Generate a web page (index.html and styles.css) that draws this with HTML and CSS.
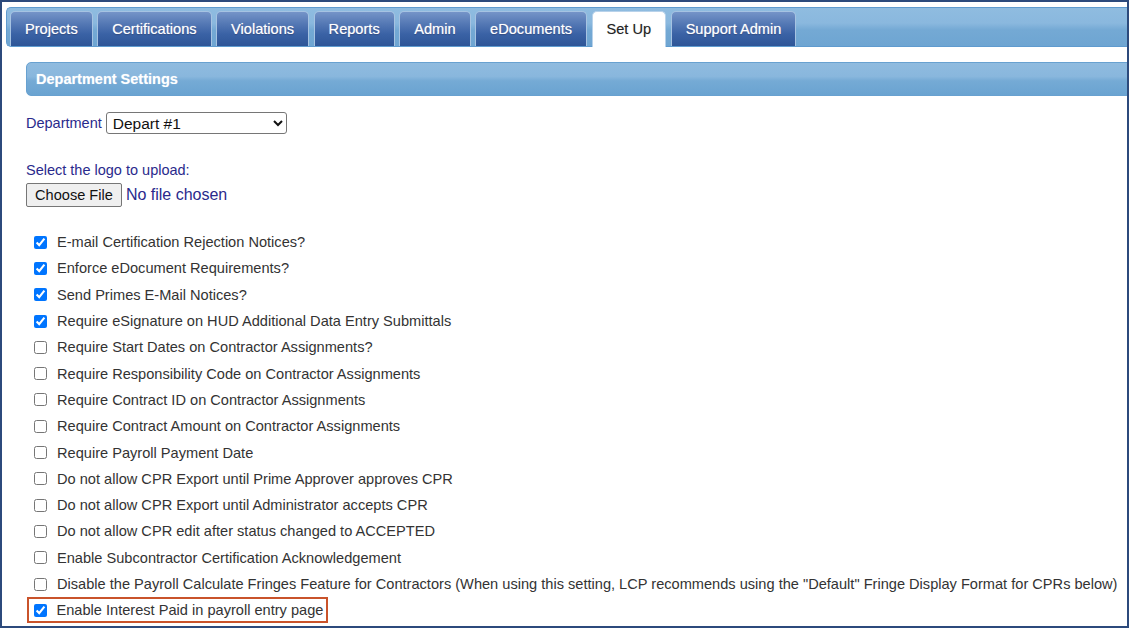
FILE: index.html
```html
<!DOCTYPE html>
<html lang="en">
<head>
<meta charset="utf-8">
<title>Department Settings</title>
<link rel="stylesheet" href="styles.css">
</head>
<body>
<div class="frame">
  <nav class="tabbar">
    <a class="tab">Projects</a>
    <a class="tab">Certifications</a>
    <a class="tab">Violations</a>
    <a class="tab">Reports</a>
    <a class="tab">Admin</a>
    <a class="tab">eDocuments</a>
    <a class="tab active">Set Up</a>
    <a class="tab">Support Admin</a>
  </nav>
  <main class="content">
    <div class="section-head">Department Settings</div>
    <div class="dept-row">
      <label class="navy" for="dept">Department</label>
      <select id="dept" class="dept-select">
        <option>Depart #1</option>
      </select>
    </div>
    <div class="upload">
      <div class="navy">Select the logo to upload:</div>
      <input type="file" class="file-input">
    </div>
    <ul class="options">
      <li class="row"><input type="checkbox" checked><span>E-mail Certification Rejection Notices?</span></li>
      <li class="row"><input type="checkbox" checked><span>Enforce eDocument Requirements?</span></li>
      <li class="row"><input type="checkbox" checked><span>Send Primes E-Mail Notices?</span></li>
      <li class="row"><input type="checkbox" checked><span>Require eSignature on HUD Additional Data Entry Submittals</span></li>
      <li class="row"><input type="checkbox"><span>Require Start Dates on Contractor Assignments?</span></li>
      <li class="row"><input type="checkbox"><span>Require Responsibility Code on Contractor Assignments</span></li>
      <li class="row"><input type="checkbox"><span>Require Contract ID on Contractor Assignments</span></li>
      <li class="row"><input type="checkbox"><span>Require Contract Amount on Contractor Assignments</span></li>
      <li class="row"><input type="checkbox"><span>Require Payroll Payment Date</span></li>
      <li class="row"><input type="checkbox"><span>Do not allow CPR Export until Prime Approver approves CPR</span></li>
      <li class="row"><input type="checkbox"><span>Do not allow CPR Export until Administrator accepts CPR</span></li>
      <li class="row"><input type="checkbox"><span>Do not allow CPR edit after status changed to ACCEPTED</span></li>
      <li class="row"><input type="checkbox"><span>Enable Subcontractor Certification Acknowledgement</span></li>
      <li class="row"><input type="checkbox"><span>Disable the Payroll Calculate Fringes Feature for Contractors (When using this setting, LCP recommends using the "Default" Fringe Display Format for CPRs below)</span></li>
      <li class="row highlight"><input type="checkbox" checked><span>Enable Interest Paid in payroll entry page</span></li>
    </ul>
  </main>
</div>
</body>
</html>
```
FILE: styles.css
```css
html, body {
  margin: 0;
  padding: 0;
  background: #ffffff;
}

body {
  font-family: "Liberation Sans", Arial, sans-serif;
}

.frame {
  width: 1129px;
  height: 628px;
  box-sizing: border-box;
  border: 2px solid #2c4a7c;
  overflow: hidden;
  background: #ffffff;
}

/* ---------- tab bar ---------- */
.tabbar {
  display: flex;
  align-items: flex-end;
  gap: 4.5px;
  height: 40px;
  box-sizing: border-box;
  margin: 5px 0 0 4px;
  padding-left: 3px;
  border: 1px solid #5f9bcf;
  border-right: none;
  border-radius: 5px 0 0 5px;
  background: linear-gradient(180deg, #8fbce0 0%, #8ab8de 40%, #74a9d4 58%, #6ea5d2 100%);
}

.tab {
  display: flex;
  align-items: center;
  height: 35px;
  box-sizing: border-box;
  padding: 0 14px;
  border: 1px solid #a6c3e2;
  border-bottom: none;
  border-radius: 5px 5px 0 0;
  background: linear-gradient(180deg, #7594c8 0%, #5478b4 35%, #3a62a5 65%, #2e5597 100%);
  color: #ffffff;
  font-size: 14.6px;
  text-shadow: 0 0 1px rgba(255, 255, 255, 0.6), 0 1px 1px rgba(0, 0, 40, 0.35);
  white-space: nowrap;
  cursor: pointer;
}

.tab.active {
  background: #ffffff;
  color: #222222;
  border-color: #b8d2ea;
  height: 36px;
  margin-bottom: -1px;
  padding-bottom: 1px;
  text-shadow: 0 0 1px rgba(0, 0, 0, 0.25);
}

/* ---------- content ---------- */
.content {
  padding: 15px 0 0 24px;
}

.section-head {
  height: 34px;
  box-sizing: border-box;
  display: flex;
  align-items: center;
  padding-left: 9px;
  margin-right: -10px;
  border: 1px solid #68a1d0;
  border-radius: 5px 0 0 5px;
  background: linear-gradient(180deg, #8fbbdf 0%, #89b7dd 42%, #75aad5 56%, #6aa3d1 100%);
  color: #ffffff;
  font-weight: bold;
  font-size: 14.5px;
  text-shadow: 0 0 1px rgba(255, 255, 255, 0.5);
}

.navy {
  color: #2a2a8c;
  font-size: 14.5px;
}

.dept-row {
  display: flex;
  align-items: center;
  gap: 4px;
  margin-top: 16px;
  height: 22px;
}

.dept-select {
  width: 181px;
  height: 22px;
  box-sizing: border-box;
  border: 1px solid #767676;
  border-radius: 3px;
  background: #ffffff;
  color: #111111;
  font-family: "Liberation Sans", Arial, sans-serif;
  font-size: 15.5px;
  padding: 0 2px;
}

.upload {
  margin-top: 28px;
  display: flex;
  flex-direction: column;
  align-items: flex-start;
  gap: 5px;
}

.file-input {
  font-family: "Liberation Sans", Arial, sans-serif;
  font-size: 16px;
  color: #2a2a8c;
  height: 24px;
}

.file-input::file-selector-button {
  height: 24px;
  padding: 0 8px;
  margin-right: 4px;
  border: 1px solid #767676;
  border-radius: 2px;
  background: #efefef;
  color: #111111;
  font-family: "Liberation Sans", Arial, sans-serif;
  font-size: 14.6px;
}

/* ---------- options ---------- */
.options {
  list-style: none;
  margin: 22px 0 0;
  padding: 0;
}

.row {
  display: flex;
  align-items: center;
  height: 26.3px;
  box-sizing: border-box;
  padding-left: 8px;
  color: #333333;
  font-size: 14.6px;
  white-space: nowrap;
}

.row input {
  width: 13px;
  height: 13px;
  margin: 0 10px 0 0;
  flex: none;
}

.row.highlight {
  width: fit-content;
  margin-left: 1px;
  padding: 0 3px 0 4.5px;
  border: 2.6px solid #c9532b;
}
```
